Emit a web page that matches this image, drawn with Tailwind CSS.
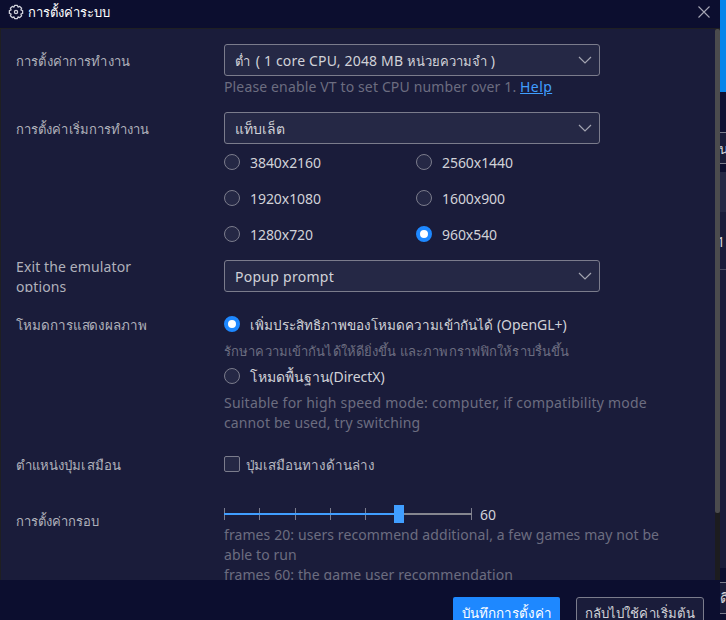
<!DOCTYPE html>
<html lang="th">
<head>
<meta charset="utf-8">
<title>การตั้งค่าระบบ</title>
<script src="https://cdn.jsdelivr.net/npm/@tailwindcss/browser@4"></script>
</head>
<body class="w-[726px] h-[620px] overflow-hidden flex bg-[#0c0e2f] font-['Noto_Sans',sans-serif] text-[14px] leading-5 text-[#d1d2d8] whitespace-nowrap">

<div class="w-[720px] h-[620px] flex flex-col shrink-0">
  <header class="h-7 shrink-0 flex items-center pl-2 pr-[9px] text-white">
    <svg class="size-4 -mt-1 shrink-0" viewBox="0 0 16 16" fill="none" stroke="#d0d1da" stroke-width="1.3" stroke-linejoin="round"><path d="M6.6 1.4h2.8l.6 1.7 1.7-.7 1.9 1.9-.7 1.7 1.7.6v2.8l-1.7.6.7 1.7-1.9 1.9-1.7-.7-.6 1.7H6.6L6 12.9l-1.7.7-1.9-1.9.7-1.7-1.7-.6V6.6L3.1 6l-.7-1.7 1.9-1.9 1.7.7z"/><circle cx="8" cy="8" r="1.6"/></svg>
    <h1 class="ml-1 -mt-1 text-[13px] tracking-[0.03px]">การตั้งค่าระบบ</h1>
    <svg class="ml-auto -mt-1 size-[14px]" viewBox="0 0 14 14" fill="none" stroke="#a6a7b5" stroke-width="1.1"><path d="M1.5 1.5l11 11M12.5 1.5l-11 11"/></svg>
  </header>

  <div class="h-[552px] shrink-0 flex overflow-hidden border-l border-t border-[#1f1f22] bg-[#1a1c3a]">
    <main class="w-[714px] shrink-0 pl-[15px] pt-[15px]">
      <section class="grid grid-cols-[208px_1fr] h-[68px]">
        <div class="pt-[7px] text-[13px] tracking-[0.15px] text-[#b0b1bb]">การตั้งค่าการทำงาน</div>
        <div>
          <div class="w-[376px] h-8 flex items-center justify-between border border-[#7b7c8c] rounded-[3px] bg-[#252845] pl-[10px] pr-[7px]"><span class="pt-[2px]"><span class="mr-[2px] text-[13px]">ต่ำ</span><span class="tracking-[0.17px]"> ( 1 core CPU, 2048 MB </span><span class="text-[13px]">หน่วยความจำ</span> )</span><svg class="size-[14px]" viewBox="0 0 14 14" fill="none" stroke="#a3a4b0" stroke-width="1.2"><path d="M1 4l6 6 6-6"/></svg></div>
          <p class="pt-px text-[#6c6d80] tracking-[0.14px]">Please enable VT to set CPU number over 1. <a class="text-[#409eff] underline tracking-[0.4px]">Help</a></p>
        </div>
      </section>

      <section class="grid grid-cols-[208px_1fr] h-[140px]">
        <div class="pt-[7px] text-[13px] tracking-[0.08px] text-[#b0b1bb]">การตั้งค่าเริ่มการทำงาน</div>
        <div>
          <div class="w-[376px] h-8 flex items-center justify-between border border-[#7b7c8c] rounded-[3px] bg-[#252845] pl-[10px] pr-[7px]"><span class="pt-[2px]">แท็บเล็ต</span><svg class="size-[14px]" viewBox="0 0 14 14" fill="none" stroke="#a3a4b0" stroke-width="1.2"><path d="M1 4l6 6 6-6"/></svg></div>
          <div class="grid grid-cols-[192px_192px] auto-rows-[36px] items-center">
            <label class="flex items-center gap-[10px]"><i class="size-4 rounded-full border border-[#7b7c8c] bg-[#252845]"></i><span class="pt-[2px] tracking-[-0.06px]">3840x2160</span></label>
            <label class="flex items-center gap-[10px]"><i class="size-4 rounded-full border border-[#7b7c8c] bg-[#252845]"></i><span class="pt-[2px] tracking-[-0.06px]">2560x1440</span></label>
            <label class="flex items-center gap-[10px]"><i class="size-4 rounded-full border border-[#7b7c8c] bg-[#252845]"></i><span class="pt-[2px] tracking-[-0.06px]">1920x1080</span></label>
            <label class="flex items-center gap-[10px]"><i class="size-4 rounded-full border border-[#7b7c8c] bg-[#252845]"></i><span class="pt-[2px] tracking-[-0.06px]">1600x900</span></label>
            <label class="flex items-center gap-[10px]"><i class="size-4 rounded-full border border-[#7b7c8c] bg-[#252845]"></i><span class="pt-[2px] tracking-[-0.06px]">1280x720</span></label>
            <label class="flex items-center gap-[10px]"><i class="size-4 rounded-full border-4 border-[#1e88ff] bg-white"></i><span class="pt-[2px] tracking-[-0.06px]">960x540</span></label>
          </div>
        </div>
      </section>

      <section class="grid grid-cols-[208px_1fr] h-10 overflow-hidden">
        <div class="pt-[5px] tracking-[0.12px] text-[#b0b1bb]">Exit the emulator<br>options</div>
        <div class="pt-2">
          <div class="w-[376px] h-8 flex items-center justify-between border border-[#7b7c8c] rounded-[3px] bg-[#252845] pl-[10px] pr-[7px]"><span class="pt-[2px] tracking-[0.27px]">Popup prompt</span><svg class="size-[14px]" viewBox="0 0 14 14" fill="none" stroke="#a3a4b0" stroke-width="1.2"><path d="M1 4l6 6 6-6"/></svg></div>
        </div>
      </section>

      <section class="grid grid-cols-[208px_1fr] h-[148px]">
        <div class="pt-[23px] text-[13.4px] tracking-[-0.06px] text-[#b0b1bb]">โหมดการแสดงผลภาพ</div>
        <div class="pt-[22px]">
          <label class="flex items-center gap-[10px] h-5"><i class="size-4 rounded-full border-4 border-[#1e88ff] bg-white"></i><span class="pt-[2px] text-[13.5px] tracking-[-0.02px]">เพิ่มประสิทธิภาพของโหมดความเข้ากันได้ <span class="text-[14px]">(OpenGL+)</span></span></label>
          <p class="h-8 pt-[7px] text-[13px] tracking-[0.11px] text-[#6c6d80]">รักษาความเข้ากันได้ให้ดียิ่งขึ้น และภาพกราฟฟิกให้ราบรื่นขึ้น</p>
          <label class="flex items-center gap-[10px] h-5"><i class="size-4 rounded-full border border-[#7b7c8c] bg-[#252845]"></i><span class="pt-[2px] tracking-[-0.06px]">โหมดพื้นฐาน(DirectX)</span></label>
          <p class="pt-[7px] text-[#6c6d80] tracking-[0.22px]">Suitable for high speed mode: computer, if compatibility mode<br><span class="tracking-[0.12px]">cannot be used, try switching</span></p>
        </div>
      </section>

      <section class="grid grid-cols-[208px_1fr] h-[65px]">
        <div class="pt-[15px] text-[13.2px] tracking-[0.07px] text-[#b0b1bb]">ตำแหน่งปุ่มเสมือน</div>
        <div class="pt-[14px]">
          <label class="flex items-center gap-[6px] h-5 text-[13.4px] text-[#b8b9c2]"><i class="size-4 rounded-[2px] border border-[#7b7c8c] bg-[#252845]"></i><span class="pt-[2px]">ปุ่มเสมือนทางด้านล่าง</span></label>
        </div>
      </section>

      <section class="grid grid-cols-[208px_1fr]">
        <div class="pt-[6px] text-[13px] tracking-[0.03px] text-[#b0b1bb]">การตั้งค่ากรอบ</div>
        <div>
          <div class="flex items-center h-[18px]">
            <svg class="w-[248px] h-[18px]" viewBox="0 0 248 18"><path d="M.5 3v12M35.5 3v12M71.5 3v12M106.5 3v12M141.5 3v12M247.5 3v12" stroke="#7b7c8c"/><path d="M175 9h73" stroke="#85868f" stroke-width="2"/><path d="M0 9h175" stroke="#409eff" stroke-width="2"/><path d="M170 0h10v18h-10z" fill="#409eff"/></svg>
            <span class="ml-2 pt-[2px]">60</span>
          </div>
          <p class="pt-[2px] text-[#6c6d80] tracking-[0.09px]">frames 20: users recommend additional, a few games may not be<br>able to run<br>frames 60: the game user recommendation</p>
        </div>
      </section>
    </main>
    <div class="w-[5px] bg-[#1c1c1f]"><div class="h-[484px] rounded-[2px] bg-[#4b4b4d]"></div></div>
  </div>

  <footer class="flex-1 min-h-0 flex justify-end gap-4 pt-[17px] pr-4 text-[13.4px]">
    <button class="w-[107px] h-8 shrink-0 rounded-[2px] bg-[#1e88ff] text-white">บันทึกการตั้งค่า</button>
    <button class="w-32 h-8 shrink-0 rounded-[3px] border border-[#7b7c8c] bg-[#1a1c3a] text-[13.2px] tracking-[0.03px]">กลับไปใช้ค่าเริ่มต้น</button>
  </footer>
</div>

<aside class="w-[6px] shrink-0 h-[620px] flex flex-col overflow-hidden">
  <div class="h-[92px] shrink-0 bg-[#0684ea]"></div>
  <div class="h-10 shrink-0 bg-[#0f1032]"></div>
  <div class="h-8 shrink-0 border-y border-[#7b7c8c] bg-[#1a1c3a] pt-[6px] overflow-hidden"><span class="-ml-px">น</span></div>
  <div class="h-2 shrink-0"></div>
  <div class="h-10 shrink-0 bg-[#252845]"></div>
  <div class="h-[58px] shrink-0 border-b border-[#4a4b62] bg-[#1a1c3a] pt-[20px] overflow-hidden"><span class="-ml-[3px]">1</span></div>
  <div class="h-[298px] shrink-0 bg-[#1a1c3a]"></div>
  <div class="h-[14px] shrink-0"></div>
  <div class="h-8 shrink-0 border-y border-[#7b7c8c] bg-[#1a1c3a] pt-[5px] overflow-hidden">ดี</div>
</aside>
</body>
</html>
